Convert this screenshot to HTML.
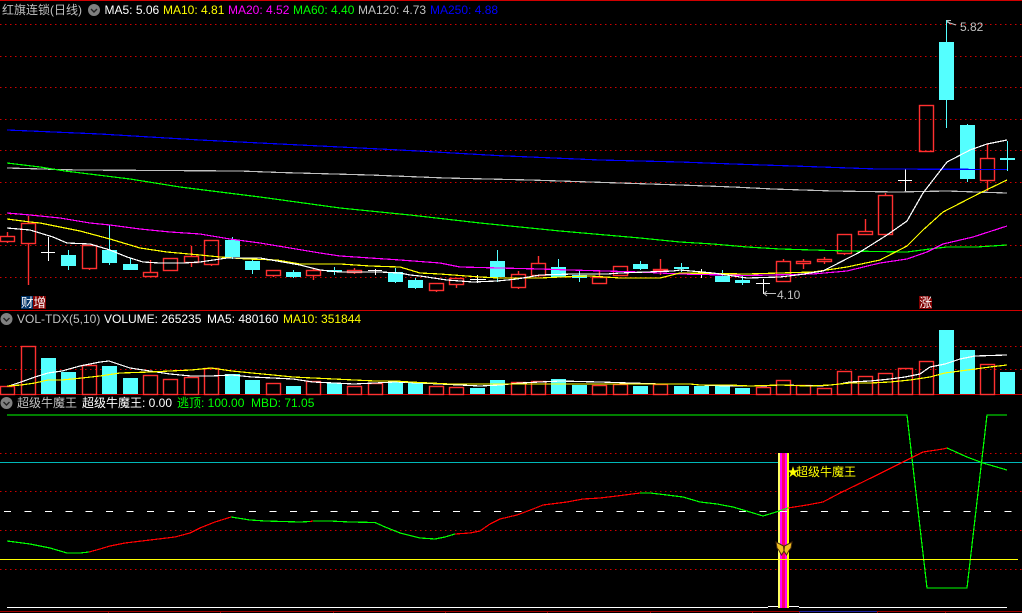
<!DOCTYPE html>
<html><head><meta charset="utf-8"><style>
html,body{margin:0;padding:0;background:#000;width:1022px;height:613px;overflow:hidden}
svg{display:block}
text{font-family:"Liberation Sans","Noto Sans CJK SC",sans-serif;font-size:12px}
polyline{stroke-width:1.2}
</style></head><body>
<svg width="1022" height="613" viewBox="0 0 1022 613" xmlns="http://www.w3.org/2000/svg">
<rect width="1022" height="613" fill="#000"/>
<g shape-rendering="crispEdges" fill="none">
<!-- grid -->
<path stroke="#d00000" stroke-dasharray="1.5 3.5" d="M0 24.5H1022M0 56.5H1022M0 87.5H1022M0 119.5H1022M0 150.5H1022M0 182.5H1022M0 214.5H1022M0 245.5H1022M0 277.5H1022M0 346.5H1022M0 369.5H1022M0 453.5H1022M0 491.5H1022M0 530.5H1022M0 569.5H1022"/>
<path stroke="#d00000" d="M0 .5H1022M0 310.5H1022M0 394.5H1022"/>
<path stroke="#a00000" d="M0 611.5H799M877 611.5H1022M108.5 611V613M220.5 611V613M333.5 611V613M445.5 611V613M547.5 611V613M650.5 611V613M752.5 611V613M799.5 611V613M877.5 611V613M945.5 611V613"/>
<path stroke="#2020a0" d="M799 611.5H877"/>

<!-- candles: cyan -->
<g fill="#54ffff">
<rect x="61" y="255" width="15" height="11"/><rect x="102" y="250" width="15" height="13"/><rect x="123" y="264" width="15" height="6"/><rect x="225" y="240" width="15" height="17"/><rect x="245" y="261" width="15" height="9"/><rect x="286" y="272" width="15" height="5"/><rect x="327" y="270" width="15" height="2"/><rect x="388" y="272" width="15" height="10"/><rect x="408" y="280" width="15" height="8"/><rect x="490" y="261" width="15" height="16"/><rect x="551" y="267" width="15" height="10"/><rect x="572" y="275" width="15" height="3"/><rect x="633" y="264" width="15" height="5"/><rect x="674" y="267" width="15" height="2"/><rect x="715" y="276" width="15" height="6"/><rect x="735" y="280" width="15" height="3"/><rect x="939" y="42" width="15" height="58"/><rect x="960" y="125" width="15" height="54"/><rect x="1000" y="158" width="15" height="2"/>
</g>
<path stroke="#54ffff" d="M68.5 250V270M109.5 225V265M130.5 258V264M232.5 237V259M252.5 259V274M293.5 270V278M334.5 267V275M395.5 268V283M415.5 278V289M497.5 250V282M558.5 259V277M579.5 270V282M640.5 261V270M681.5 263V272M722.5 270V282M742.5 276V285M946.5 20V128M967.5 124V182M1007.5 141V171"/>
<!-- candles: white doji -->
<path stroke="#fff" d="M41 252.5H55M48.5 237V261M368 270.5H382M375.5 269V275M470 279.5H486M477.5 275V283M694 273.5H708M701.5 269V278M756 283.5H770M763.5 279V294M898 180.5H912M905.5 169V192"/>
</g>
<!-- candles: red -->
<g stroke="#ff3030" fill="none" stroke-width="1.4">
<rect x="0.5" y="236.5" width="14" height="5"/><rect x="21.5" y="223.5" width="14" height="20"/><rect x="82.5" y="245.5" width="14" height="23"/><rect x="143.5" y="272.5" width="14" height="4"/><rect x="163.5" y="258.5" width="14" height="12"/><rect x="184.5" y="256.5" width="14" height="6"/><rect x="204.5" y="240.5" width="14" height="24"/><rect x="266.5" y="270.5" width="14" height="5"/><rect x="306.5" y="270.5" width="14" height="5"/><rect x="347.5" y="270.5" width="14" height="2"/><rect x="429.5" y="283.5" width="14" height="7"/><rect x="449.5" y="278.5" width="14" height="6"/><rect x="511.5" y="274.5" width="14" height="13"/><rect x="531.5" y="263.5" width="14" height="12"/><rect x="592.5" y="277.5" width="14" height="6"/><rect x="613.5" y="266.5" width="14" height="9"/><rect x="653.5" y="269.5" width="14" height="1"/><rect x="776.5" y="261.5" width="14" height="20"/><rect x="796.5" y="261.5" width="14" height="2"/><rect x="817.5" y="259.5" width="14" height="2"/><rect x="837.5" y="234.5" width="14" height="19"/><rect x="858.5" y="231.5" width="14" height="3"/><rect x="878.5" y="195.5" width="14" height="39"/><rect x="919.5" y="105.5" width="14" height="46"/><rect x="980.5" y="158.5" width="14" height="22"/>
<path d="M7.5 232V236M7.5 242V243M28.5 216V223M28.5 244V285M89.5 269V270M150.5 260V272M191.5 246V256M191.5 263V267M211.5 265V266M273.5 276V277M313.5 268V270M313.5 276V280M354.5 268V270M354.5 273V274M436.5 291V292M456.5 285V288M518.5 271V274M518.5 288V289M538.5 256V263M538.5 276V277M599.5 270V277M660.5 259V269M660.5 271V275M783.5 259V261M803.5 259V261M803.5 264V269M824.5 257V259M824.5 262V264M844.5 254V255M865.5 219V231M885.5 193V195M987.5 144V158M987.5 181V191"/>
</g>
<g shape-rendering="crispEdges" fill="none">
<!-- MA250 -->
<polyline stroke="#0000ff" points="7,130 100,134 200,140 300,145 400,150 500,155.7 600,160 680,162 733,164 793,166 877,169 1007,169.5"/>
<!-- MA120 -->
<polyline stroke="#c0c0c0" points="7,168 78,170 240,171 280,172.5 370,175 445,178 530,180 590,182 650,184 680,185 733,187 773,189 833,191 897,192 947,191 1007,193"/>
<!-- MA60 -->
<polyline stroke="#00ff00" points="7,163 40,167 65,171 130,179 180,187 260,197 340,208 410,215 480,223 560,231 640,238 680,242 713,244 747,247 780,249 813,250 847,251 907,252 930,249 947,247 977,247 1007,245"/>
<!-- MA20 -->
<polyline stroke="#ff00ff" points="7,213 30,215 60,218 90,223 110,225 140,229 170,232 200,234 230,239 260,243 290,248 320,253 340,256 370,258 400,260 440,263 460,267 500,268 540,269 570,270 640,272 680,274 747,275.5 813,274 847,271 880,263 907,259 927,252 943,244 973,237 1007,226"/>
<!-- MA10 -->
<polyline stroke="#ffff00" points="7,219 30,222 40,223 80,231 110,239 140,248 167,252 200,255 220,257 247,259 277,260 300,264 340,264 370,266 400,267 410,270 420,273 440,274 480,277 500,278 540,278 560,277 590,276 620,278 660,278 680,273 747,274 813,272 847,267 880,260 907,246 923,230 943,212 980,193 1007,180"/>
<!-- MA5 -->
<polyline stroke="#ffffff" points="7,228 30,230 53,237 67,243 90,244 110,250 127,257 143,262 160,263 183,263 200,262 227,258 260,258 277,261 300,265 320,270 340,272 380,272 400,273 410,275 420,276 447,280 473,282 497,281 517,279 540,275 573,274 607,274 620,273 673,271 680,270 713,273 747,278 780,277 797,275 823,271 860,252 887,235 907,221 923,193 947,162 970,150 987,144 1007,140"/>
</g>

<!-- VOLUME bars -->
<g stroke="#ff3030" fill="none" stroke-width="1.4">
<rect x="0.5" y="386.5" width="14" height="8"/><rect x="21.5" y="346.5" width="14" height="48"/><rect x="82.5" y="365.5" width="14" height="29"/><rect x="143.5" y="375.5" width="14" height="19"/><rect x="163.5" y="379.5" width="14" height="15"/><rect x="184.5" y="377.5" width="14" height="17"/><rect x="204.5" y="368.5" width="14" height="26"/><rect x="266.5" y="383.5" width="14" height="11"/><rect x="306.5" y="381.5" width="14" height="13"/><rect x="347.5" y="386.5" width="14" height="8"/><rect x="368.5" y="383.5" width="14" height="11"/><rect x="429.5" y="386.5" width="14" height="8"/><rect x="449.5" y="387.5" width="14" height="7"/><rect x="511.5" y="382.5" width="14" height="12"/><rect x="531.5" y="381.5" width="14" height="13"/><rect x="592.5" y="385.5" width="14" height="9"/><rect x="613.5" y="384.5" width="14" height="10"/><rect x="653.5" y="384.5" width="14" height="10"/><rect x="756.5" y="387.5" width="14" height="7"/><rect x="776.5" y="380.5" width="14" height="14"/><rect x="796.5" y="385.5" width="14" height="9"/><rect x="817.5" y="388.5" width="14" height="6"/><rect x="837.5" y="371.5" width="14" height="23"/><rect x="858.5" y="376.5" width="14" height="18"/><rect x="878.5" y="373.5" width="14" height="21"/><rect x="898.5" y="368.5" width="14" height="26"/><rect x="919.5" y="361.5" width="14" height="33"/><rect x="980.5" y="364.5" width="14" height="30"/>
</g>
<g shape-rendering="crispEdges" fill="none">
<g fill="#54ffff">
<rect x="41" y="358" width="15" height="36"/><rect x="61" y="372" width="15" height="22"/><rect x="102" y="366" width="15" height="28"/><rect x="123" y="378" width="15" height="16"/><rect x="225" y="374" width="15" height="20"/><rect x="245" y="380" width="15" height="14"/><rect x="286" y="386" width="15" height="8"/><rect x="327" y="383" width="15" height="11"/><rect x="388" y="382" width="15" height="12"/><rect x="408" y="383" width="15" height="11"/><rect x="470" y="388" width="15" height="6"/><rect x="490" y="380" width="15" height="14"/><rect x="551" y="379" width="15" height="15"/><rect x="572" y="385" width="15" height="9"/><rect x="633" y="386" width="15" height="8"/><rect x="674" y="386" width="15" height="8"/><rect x="694" y="386" width="15" height="8"/><rect x="715" y="386" width="15" height="8"/><rect x="735" y="388" width="15" height="6"/><rect x="939" y="330" width="15" height="64"/><rect x="960" y="350" width="15" height="44"/><rect x="1000" y="372" width="15" height="22"/>
</g>
<polyline stroke="#ffffff" points="9,386 21,382 35,377 48,373 62,371 80,366 100,362 109,361 130,368 150,371 170,374 191,376 211,376 232,375 252,377 273,378 293,379 313,382 334,383 354,384 375,383 395,382 420,383 440,384 480,386 500,385 520,383 560,381 600,382 630,383 660,384 690,384 700,385 730,386 760,386 780,385 820,386 830,385 840,384 850,382 870,381 890,379 905,377 920,374 930,367 945,364 960,359 975,356 1007,355"/>
<polyline stroke="#ffff00" points="7,386 21,385 35,383 48,380 62,380 82,378 100,376 120,373 150,372 170,371 191,370 211,368 232,371 252,373 273,375 293,377 313,378 334,379 354,380 375,381 395,381 410,382 450,384 690,384 700,385 730,385 750,386 780,385 810,386 830,385 850,383 870,383 890,382 910,380 930,377 945,373 960,371 975,369 990,367 1007,365"/>

<!-- panel 3 -->
<path stroke="#00b8b8" d="M0 462.5H1022"/>
<polyline stroke="#00ff00" points="7,415 907,415 927,588 967,588 987,415 1007,415"/>
<path stroke="#ffff00" d="M0 559.5H778M789 559.5H1018"/>
<path stroke="#fff" d="M7 607.5H768M799 607.5H1007M768 606.5H799"/>
<!-- signal bar -->
<rect x="778" y="453" width="2" height="155" fill="#ffff60"/>
<rect x="780" y="453" width="2" height="155" fill="#ff00ff"/>
<rect x="782" y="453" width="3" height="155" fill="#ff0066"/>
<rect x="785" y="453" width="2" height="155" fill="#ff00ff"/>
<rect x="787" y="453" width="2" height="155" fill="#ffff00"/>
<path stroke="#ffff00" d="M778 559.5H789"/>
<path stroke="#fff" stroke-dasharray="7 13.42" d="M4 511.5H1020"/>
<!-- MBD -->
<g stroke="#00ff00">
<polyline points="7,541 15,542 30,544 50,548 67,553 80,553 89,552"/>
<polyline points="231,517 250,520 265,521 300,522 310,521.5"/>
<polyline points="313,521 330,521 350,522 375,522.5 385,527 400,533 420,538 435,539 445,537 455,534"/>
<polyline points="640,493 650,493 667,495 683,497 700,502 717,504 733,507 750,512 763,516 773,513 788,508"/>
<polyline points="947,448 967,457 983,463 1007,470"/>
</g>
<g stroke="#ff0000">
<polyline points="89,552 100,549 110,546 125,543 150,540 175,537 190,533 200,528 215,522 231,517"/>
<polyline points="310,521.5 313,521"/>
<polyline points="455,534 470,533 480,531 490,524 500,519 517,515 533,509 543,505 567,502 583,499 600,498 617,496 640,493"/>
<polyline points="788,508 807,505 823,502 840,493 873,477 907,460 923,452 943,449 947,448"/>
</g>
</g>

<!-- butterfly -->
<g stroke="#4a2a08" stroke-width="1" fill="#f0c020">
<path d="M776 542 L783.500 546 L784 551 L781.500 555 L779 550.500 L777 548 Z"/>
<path d="M792 542 L784.500 546 L784 551 L786.500 555 L789 550.500 L791 548 Z"/>
</g>

<!-- arrows -->
<path stroke="#c0c0c0" fill="none" d="M947 20.500H951M947 20.500L950 24M947 22L956 25"/>
<path stroke="#c0c0c0" fill="none" d="M764 293.500H776M764 293.500L767 291M764 293.500L767 296"/>
<text x="960" y="31" fill="#c0c0c0">5.82</text>
<text x="777" y="299" fill="#c0c0c0">4.10</text>

<!-- badges -->
<rect x="21" y="296" width="12" height="13" fill="#003366"/>
<rect x="33" y="296" width="13" height="13" fill="#800000"/>
<text x="21" y="307" fill="#fff" style="font-size:12.500px">财</text><text x="33.500" y="307" fill="#fff" style="font-size:12.500px">增</text>
<path d="M919 296H929L932 299V309H919Z" fill="#800000"/>
<text x="919.500" y="307" fill="#fff" style="font-size:12.500px">涨</text>

<!-- labels -->
<text x="2" y="14" fill="#c0c0c0">红旗连锁(日线)</text>
<circle cx="94" cy="10" r="6" fill="#808080"/><path d="M91 9l3 3 3-3" stroke="#222" stroke-width="1.4" fill="none"/>
<text x="104.500" y="14" fill="#fff">MA5: 5.06</text>
<text x="163" y="14" fill="#ff0">MA10: 4.81</text>
<text x="228" y="14" fill="#f0f">MA20: 4.52</text>
<text x="293" y="14" fill="#0f0">MA60: 4.40</text>
<text x="358" y="14" fill="#c0c0c0">MA120: 4.73</text>
<text x="430" y="14" fill="#0000ff">MA250: 4.88</text>

<circle cx="6.500" cy="319" r="6" fill="#808080"/><path d="M3.500 318l3 3 3-3" stroke="#222" stroke-width="1.4" fill="none"/>
<text x="17" y="323" fill="#c0c0c0">VOL-TDX(5,10)</text>
<text x="104" y="323" fill="#fff">VOLUME: 265235</text>
<text x="207" y="323" fill="#fff">MA5: 480160</text>
<text x="283" y="323" fill="#ff0">MA10: 351844</text>

<circle cx="6.500" cy="403" r="6" fill="#808080"/><path d="M3.500 402l3 3 3-3" stroke="#222" stroke-width="1.4" fill="none"/>
<text x="17" y="407" fill="#c0c0c0">超级牛魔王</text>
<text x="82" y="407" fill="#fff">超级牛魔王: 0.00</text>
<text x="177" y="407" fill="#0f0">逃顶: 100.00</text>
<text x="251" y="407" fill="#0f0">MBD: 71.05</text>

<text x="787" y="476" fill="#ff0">★</text>
<text x="796" y="476" fill="#ff0">超级牛魔王</text>
</svg>
</body></html>
